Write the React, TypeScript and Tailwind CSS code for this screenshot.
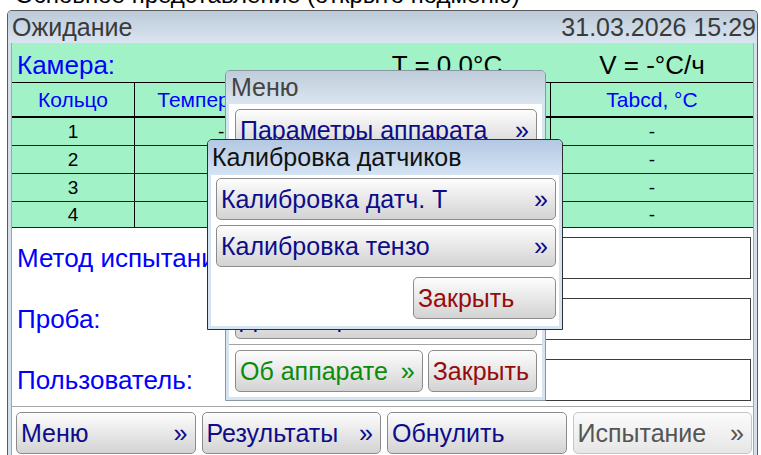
import React from 'react'
import clsx from 'clsx'

type Tone = 'navy' | 'green' | 'red' | 'muted'

const toneText: Record<Tone, string> = {
  navy: 'text-[#0d0d8a]',
  green: 'text-[#0a8c0a]',
  red: 'text-[#960c0c]',
  muted: 'text-[#555555]',
}

function Btn({
  label,
  arrow = false,
  tone = 'navy',
  className = '',
}: {
  label: string
  arrow?: boolean
  tone?: Tone
  className?: string
}) {
  const muted = tone === 'muted'
  return (
    <div
      className={clsx(
        'flex h-[42px] items-center justify-between rounded-[5px] border pl-[4px] pr-[7px] text-[25px] leading-none whitespace-nowrap',
        muted
          ? 'border-[#c6c6c6] bg-linear-to-b from-[#fbfbfb] to-[#e6e6e6]'
          : 'border-[#8c8c8c] bg-linear-to-b from-[#fdfdfd] to-[#d3d3d3]',
        toneText[tone],
        className
      )}
    >
      <span>{label}</span>
      {arrow && <span>»</span>}
    </div>
  )
}

const cols = 'grid grid-cols-[123px_208px_208px_1fr]'
const rows = ['1', '2', '3', '4']

function RingTable() {
  return (
    <div className="bg-[#a2f2c8]">
      <div className={clsx(cols, 'h-[39px] items-center pt-[5px] text-[26px] leading-none')}>
        <div className="col-span-2 pl-[5px] text-[#0000ff]">Камера:</div>
        <div className="text-center text-black">T = 0.0°C</div>
        <div className="text-center text-black">V = -°C/ч</div>
      </div>
      <div className={clsx(cols, 'h-[36px] border-t border-b-2 border-black text-[21px] leading-none text-[#0000ff]')}>
        <div className="flex items-center justify-center border-r border-black">Кольцо</div>
        <div className="flex items-center justify-center border-r border-black">Температура, °C</div>
        <div className="flex items-center justify-center border-r border-black">Tmax, °C</div>
        <div className="flex items-center justify-center">Tabcd, °C</div>
      </div>
      {rows.map((r, i) => (
        <div
          key={r}
          className={clsx(
            cols,
            i === 3 ? 'h-[26px]' : 'h-[28px]',
            'border-b border-[#1e1e1e] text-[19px] leading-none text-black'
          )}
        >
          <div className="flex items-center justify-center border-r border-black">{r}</div>
          <div className="flex items-center justify-center border-r border-black">-- / --</div>
          <div className="flex items-center justify-center border-r border-black">-</div>
          <div className="flex items-center justify-center">-</div>
        </div>
      ))}
    </div>
  )
}

function Field({ label }: { label: string }) {
  return (
    <div className="flex h-[42px] items-center">
      <span className="pl-[5px] text-[26px] leading-none text-[#0000ff] whitespace-nowrap">{label}</span>
      <div className="mr-[2px] ml-auto h-[42px] w-[511px] border border-[#3c3c3c] bg-white" />
    </div>
  )
}

function MenuDialog() {
  const items = ['Параметры аппарата', 'Калибровка датчиков', 'Параметры испытаний', 'Пользователи', 'Дата и время']
  return (
    <div className="absolute top-[70px] left-[225px] w-[321px] overflow-hidden rounded-t-[5px] border border-[#8a96a2]">
      <div className="flex h-[32px] items-center bg-linear-to-b from-[#bfccda] to-[#dae5f0] pl-[5px] text-[25px] leading-none text-[#444444]">
        Меню
      </div>
      <div className="bg-[#d6e3f0] px-[3px] pt-[1px] pb-[3px]">
        <div className="flex flex-col bg-white pt-[5px] pr-[5px] pb-[5px] pl-[6px]">
          <div className="flex flex-col gap-[5px]">
            {items.map((t) => (
              <Btn key={t} label={t} arrow />
            ))}
          </div>
          <div className="mt-[5px] -mr-[5px] -ml-[6px] border-t border-[#a4a4a4]" />
          <div className="mt-[5px] flex gap-[5px]">
            <Btn label="Об аппарате" arrow tone="green" className="w-[193px]" />
            <Btn label="Закрыть" tone="red" className="flex-1" />
          </div>
        </div>
      </div>
    </div>
  )
}

function CalibrationDialog() {
  return (
    <div className="absolute top-[139px] left-[207px] w-[356px] overflow-hidden rounded-t-[5px] border border-[#2e2e2e]">
      <div className="flex h-[34px] items-center bg-linear-to-b from-[#b3c8e2] to-[#d4e3f3] pl-[4px] text-[25px] leading-none text-[#111111]">
        Калибровка датчиков
      </div>
      <div className="bg-[#d6e3f0] px-[3px] pt-[1px] pb-[3px]">
        <div className="flex flex-col bg-white pt-[3px] pr-[3px] pb-[7px] pl-[5px]">
          <div className="flex flex-col gap-[5px]">
            <Btn label="Калибровка датч. Т" arrow />
            <Btn label="Калибровка тензо" arrow />
          </div>
          <div className="mt-[10px] flex justify-end">
            <Btn label="Закрыть" tone="red" className="w-[143px]" />
          </div>
        </div>
      </div>
    </div>
  )
}

export default function App() {
  return (
    <div className="relative h-[455px] w-[761px] overflow-hidden bg-white font-['Liberation_Sans',Arial,sans-serif]">
      {/* caption line, mostly scrolled above the window */}
      <div className="h-[10px] overflow-hidden pl-[15px]">
        <div className="-translate-y-[19px] text-[24px] leading-[28px] whitespace-nowrap text-black">
          Основное представление (открыто подменю)
        </div>
      </div>

      <div className="ml-[7px] flex h-[445px] w-[751px] flex-col overflow-hidden rounded-t-[5px] border border-b-0 border-[#5c5c5c]">
        <div className="flex h-[32px] shrink-0 items-center justify-between bg-linear-to-b from-[#bccad9] to-[#dae5f0] pr-[1px] pl-[4px] text-[25px] leading-none text-[#3a3a3a]">
          <span>Ожидание</span>
          <span>31.03.2026 15:29</span>
        </div>

        <div className="flex flex-1 flex-col bg-[#d5e0eb] px-[3px]">
          <div className="flex flex-1 flex-col border-x border-[#9ba7b3] bg-white">
            <RingTable />

            <div className="flex flex-col gap-[19px] pt-[9px] pb-[5px]">
              <Field label="Метод испытания:" />
              <Field label="Проба:" />
              <Field label="Пользователь:" />
            </div>

            <div className="grid grid-cols-4 gap-[6px] border-t border-[#a6a6a6] pt-[5px] pr-[1px] pl-[4px]">
              <Btn label="Меню" arrow />
              <Btn label="Результаты" arrow />
              <Btn label="Обнулить" />
              <Btn label="Испытание" arrow tone="muted" />
            </div>
          </div>
        </div>
      </div>

      <MenuDialog />
      <CalibrationDialog />
    </div>
  )
}
